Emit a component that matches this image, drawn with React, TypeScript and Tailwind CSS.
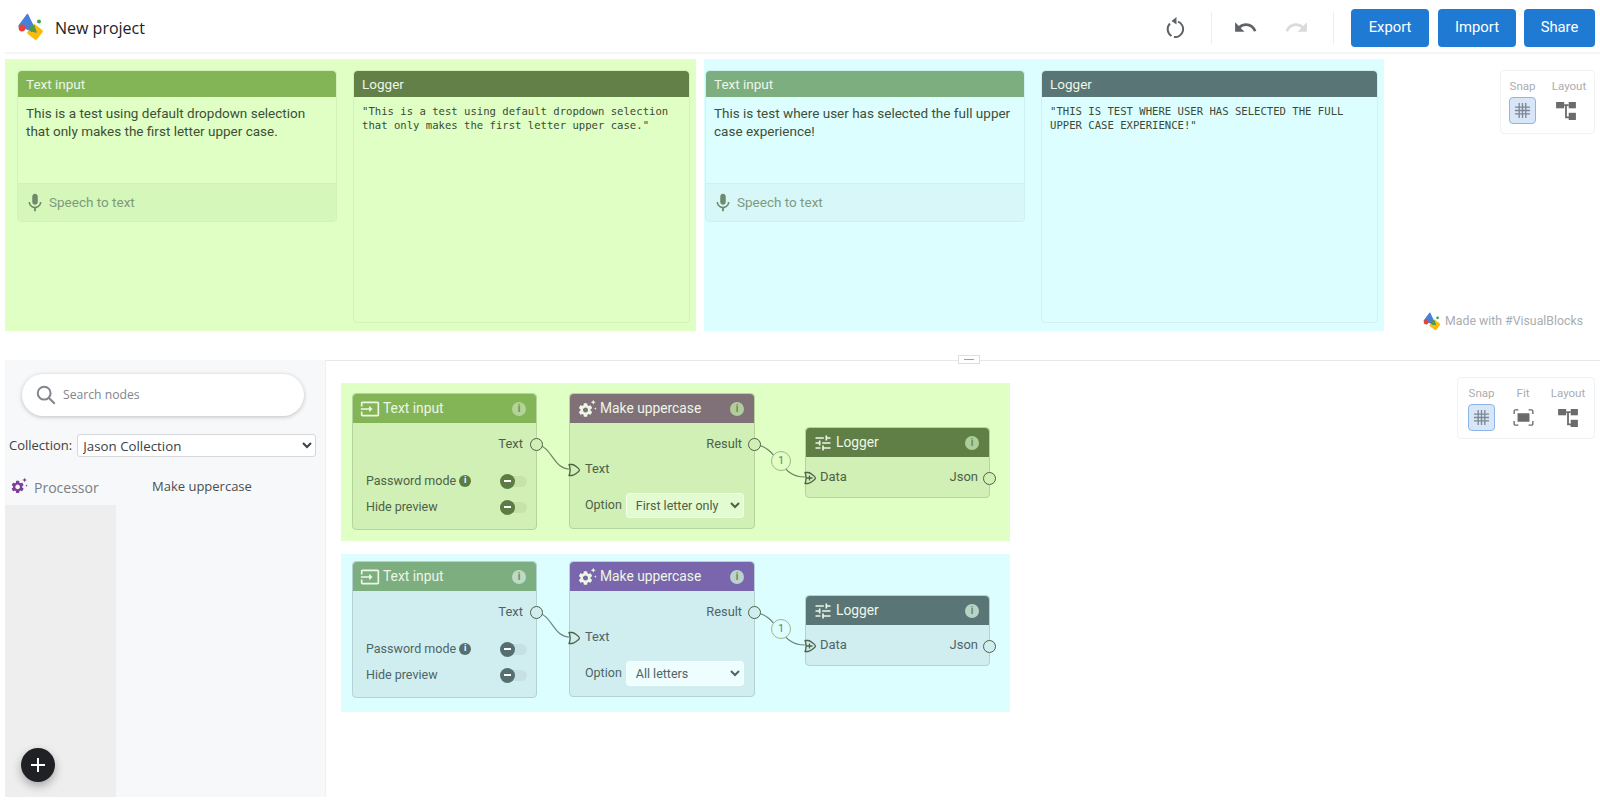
const sans = 'font-["Roboto",sans-serif]';

const Icon = ({ d, className }: { d: string; className: string }) => (
  <svg viewBox="0 0 24 24" fill="currentColor" className={className}>
    <path d={d} />
  </svg>
);

const inputIcon =
  'M21 3.01H3c-1.1 0-2 .9-2 2V9h2V4.99h18v14.03H3V15H1v4.01c0 1.1.9 1.98 2 1.98h18c1.1 0 2-.88 2-1.98v-14c0-1.11-.9-2-2-2zM11 16l4-4-4-4v3H1v2h10v3z';
const tuneIcon =
  'M3 17v2h6v-2H3zM3 5v2h10V5H3zm10 16v-2h8v-2h-8v-2h-2v6h2zM7 9v2H3v2h4v2h2V9H7zm14 4v-2H11v2h10zm-6-4h2V7h4V5h-4V3h-2v6z';
const micIcon =
  'M12 14c1.66 0 3-1.34 3-3V5c0-1.66-1.34-3-3-3S9 3.34 9 5v6c0 1.66 1.34 3 3 3zm5.3-3c0 3-2.54 5.1-5.3 5.1S6.7 14 6.7 11H5c0 3.41 2.72 6.23 6 6.72V21h2v-3.28c3.28-.48 6-3.3 6-6.72h-1.7z';
const undoIcon =
  'M12.5 8c-2.65 0-5.05.99-6.9 2.6L2 7v9h9l-3.62-3.62c1.39-1.16 3.16-1.88 5.12-1.88 3.54 0 6.55 2.31 7.6 5.5l2.37-.78C21.08 11.03 17.15 8 12.5 8z';
const redoIcon =
  'M18.4 10.6C16.55 8.99 14.15 8 11.5 8c-4.65 0-8.58 3.03-9.96 7.22L3.9 16c1.05-3.19 4.05-5.5 7.6-5.5 1.95 0 3.73.72 5.12 1.88L13 16h9V7l-3.6 3.6z';
const gearIcon =
  'M19.14 12.94c.04-.3.06-.61.06-.94 0-.32-.02-.64-.07-.94l2.03-1.58a.49.49 0 0 0 .12-.61l-1.92-3.32a.488.488 0 0 0-.59-.22l-2.39.96c-.5-.38-1.03-.7-1.62-.94l-.36-2.54a.484.484 0 0 0-.48-.41h-3.84c-.24 0-.43.17-.47.41l-.36 2.54c-.59.24-1.13.57-1.62.94l-2.39-.96c-.22-.08-.47 0-.59.22L2.74 8.87c-.12.21-.08.47.12.61l2.03 1.58c-.05.3-.09.63-.09.94s.02.64.07.94l-2.03 1.58a.49.49 0 0 0-.12.61l1.92 3.32c.12.22.37.29.59.22l2.39-.96c.5.38 1.03.7 1.62.94l.36 2.54c.05.24.24.41.48.41h3.84c.24 0 .44-.17.47-.41l.36-2.54c.59-.24 1.13-.56 1.62-.94l2.39.96c.22.08.47 0 .59-.22l1.92-3.32c.12-.22.07-.47-.12-.61l-2.01-1.58zM12 15.6c-1.98 0-3.6-1.62-3.6-3.6s1.62-3.6 3.6-3.6 3.6 1.62 3.6 3.6-1.62 3.6-3.6 3.6z';

const Logo = ({ className }: { className: string }) => (
  <svg viewBox="0 0 28 28" className={className}>
    <rect x="13" y="13" width="12" height="12" rx="1.5" transform="rotate(38 19 19)" fill="#fbbc04" />
    <path d="M11.5 1.5 L20 19 L3 13 Z" fill="#4a7fd6" stroke="#4a7fd6" strokeWidth="1.5" strokeLinejoin="round" />
    <path d="M13 14 L18.5 12 L20 18 L15 19 Z" fill="#4f9b45" />
    <circle cx="6" cy="15" r="3.4" fill="#ea4335" />
    <circle cx="23" cy="8.5" r="2" fill="#34a853" />
  </svg>
);

const GearSpark = ({ className }: { className: string }) => (
  <svg viewBox="0 0 24 24" fill="currentColor" className={className}>
    <g transform="translate(0 3) scale(0.85)">
      <path d={gearIcon} />
    </g>
    <path d="M19.5 1l.9 2.1 2.1.9-2.1.9-.9 2.1-.9-2.1-2.1-.9 2.1-.9zM22 10l.5 1.1 1.1.5-1.1.5-.5 1.1-.5-1.1-1.1-.5 1.1-.5z" />
  </svg>
);

const GridIcon = ({ className }: { className: string }) => (
  <svg viewBox="0 0 18 18" fill="none" stroke="currentColor" strokeWidth="1.4" className={className}>
    <path d="M5.5 1v16M9 1v16M12.5 1v16M1 5.5h16M1 9h16M1 12.5h16" />
  </svg>
);

const LayoutIcon = ({ className }: { className: string }) => (
  <svg viewBox="0 0 22 20" fill="currentColor" className={className}>
    <rect x="0" y="0" width="9" height="7" />
    <rect x="14" y="0" width="8" height="7" />
    <rect x="14" y="12" width="8" height="8" />
    <path d="M9 2.500h5v2h-5zM10 4h2v12h4v2h-6z" />
  </svg>
);

const FitIcon = ({ className }: { className: string }) => (
  <svg viewBox="0 0 24 20" fill="none" stroke="currentColor" strokeWidth="1.6" className={className}>
    <path d="M1 6V2.5C1 1.7 1.7 1 2.5 1H6M18 1h3.5c.8 0 1.5.7 1.5 1.5V6M23 14v3.5c0 .8-.7 1.5-1.5 1.5H18M6 19H2.500C1.700 19 1 18.300 1 17.500V14" />
    <rect x="5" y="5" width="14" height="10" fill="currentColor" stroke="none" />
  </svg>
);

const Preview = ({
  bg,
  pad,
  inputHead,
  logHead,
  footer,
  line,
  text,
  log,
}: {
  bg: string;
  pad: string;
  inputHead: string;
  logHead: string;
  footer: string;
  line: string;
  text: string;
  log: string;
}) => (
  <div className={`flex h-[272px] gap-4 pt-[11px] pr-[6px] ${bg} ${pad}`}>
    <div className={`flex h-[152px] w-[320px] flex-col rounded border ${line}`}>
      <div className={`flex h-[26px] items-center rounded-t px-2 text-[13.5px] text-[#eef7e6] ${inputHead}`}>Text input</div>
      <div className="flex-1 px-2 pt-[7px] text-[13.5px] leading-[18px] text-[#3f4f38]">{text}</div>
      <div className={`flex h-[38px] items-center gap-[3px] rounded-b border-t pl-[6px] text-[13.5px] ${line} ${footer}`}>
        <Icon d={micIcon} className="h-[22px] w-[22px] text-[#6f8a6c]" />
        <span className="text-[#7f9a7c]">Speech to text</span>
      </div>
    </div>
    <div className={`flex h-[253px] w-[337px] flex-col rounded border ${line}`}>
      <div className={`flex h-[26px] items-center rounded-t px-2 text-[13.5px] text-[#eef7e6] ${logHead}`}>Logger</div>
      <pre className='whitespace-pre-wrap px-2 pt-[8px] font-["DejaVu_Sans_Mono",monospace] text-[10.6px] leading-[13.5px] text-[#3b4a36]'>
        {log}
      </pre>
    </div>
  </div>
);

const ToolGroup = ({ fit, className, layoutIcon }: { fit?: boolean; className: string; layoutIcon: string }) => (
  <div className={`absolute flex rounded border border-[#f1f2f3] bg-white ${className}`}>
    <div className="flex w-[43px] flex-col items-center">
      <span className="mb-[4px] text-[11.5px] leading-[14px] text-[#a9adb1]">Snap</span>
      <div className="flex h-[27px] w-[27px] items-center justify-center rounded border border-[#8ab6ec] bg-[#d8e6f7] text-[#7b8794]">
        <GridIcon className="h-[17px] w-[17px]" />
      </div>
    </div>
    {fit && (
      <div className="flex w-[40px] flex-col items-center">
        <span className="mb-[4px] text-[11.5px] leading-[14px] text-[#a9adb1]">Fit</span>
        <div className="flex h-[27px] items-center text-[#6b6b6b]">
          <FitIcon className="h-[17px] w-[21px]" />
        </div>
      </div>
    )}
    <div className="flex w-[50px] flex-col items-center">
      <span className="mb-[4px] text-[11.5px] leading-[14px] text-[#a9adb1]">Layout</span>
      <div className="flex h-[27px] items-center text-[#6b6b6b]">
        <LayoutIcon className={`h-[18px] w-[20px] ${layoutIcon}`} />
      </div>
    </div>
  </div>
);

type Tone = {
  bg: string;
  body: string;
  line: string;
  ink: string;
  fill: string;
  inputHead: string;
  procHead: string;
  logHead: string;
  field: string;
  info: string;
  edge: string;
  chip: string;
};

const green: Tone = {
  bg: 'bg-[#dfffc4]',
  body: 'bg-[#d0f0b5]',
  line: 'border-[#b5d49c]',
  ink: 'text-[#4f6048]',
  fill: 'bg-[#5b7c42]',
  inputHead: 'bg-[#83b557]',
  procHead: 'bg-[#807077]',
  logHead: 'bg-[#5f7f46]',
  field: 'bg-[#e3fbd0]',
  info: 'bg-[#b6d8a0]',
  edge: '#6d8260',
  chip: 'bg-[#dfffc4]',
};

const cyan: Tone = {
  bg: 'bg-[#ddfeff]',
  body: 'bg-[#d0eef0]',
  line: 'border-[#b3d2d4]',
  ink: 'text-[#4f6466]',
  fill: 'bg-[#566e70]',
  inputHead: 'bg-[#7cae80]',
  procHead: 'bg-[#7a66ac]',
  logHead: 'bg-[#597576]',
  field: 'bg-[#eefeff]',
  info: 'bg-[#c2dfd0]',
  edge: '#6c8284',
  chip: 'bg-[#ddfeff]',
};

const Port = ({ tone }: { tone: Tone }) => (
  <span className={`absolute -right-[7px] top-[44px] h-[13px] w-[13px] rounded-full border-[1.5px] border-[#4d6148] ${tone.body}`} />
);

const InPort = ({ className, plus }: { className: string; plus?: boolean }) => (
  <svg viewBox="0 0 14 14" fill="none" stroke="#4d6148" strokeWidth="1.3" className={`absolute h-[14px] w-[14px] ${className}`}>
    <path d="M2 1.500 H5 C7 1.500 12.500 5.500 12.500 7 C12.500 8.500 7 12.500 5 12.500 H2 C3.500 9 3.500 5 2 1.500 Z" strokeLinejoin="round" />
    {plus && <path d="M3.500 7h6M6.500 4.500v5" />}
  </svg>
);

const Head = ({ color, icon, title, info }: { color: string; icon: React.ReactNode; title: string; info: string }) => (
  <div className={`flex h-[29px] items-center gap-[3px] rounded-t pl-[7px] pr-[10px] text-[13.8px] text-[#eef6e6] ${color}`}>
    {icon}
    <span>{title}</span>
    <span className={`ml-auto flex h-[14px] w-[14px] items-center justify-center rounded-full text-[10px] font-bold text-[#6b8a58] opacity-90 ${info}`}>i</span>
  </div>
);

const Toggle = ({ tone }: { tone: Tone }) => (
  <span className="relative -mr-[4px] flex h-[11px] w-[26px] items-center rounded-full bg-black/5">
    <span className={`absolute -left-[1px] flex h-[15px] w-[15px] items-center justify-center rounded-full ${tone.fill}`}>
      <span className="h-[2px] w-[7px] bg-white" />
    </span>
  </span>
);

const Group = ({ tone, inset, option }: { tone: Tone; inset: string; option: string }) => (
  <div className={`relative h-[158px] w-[669px] shrink-0 ${tone.bg}`}>
    <div className={`absolute left-0 right-0 ${inset}`}>
      <svg className="absolute left-0 top-0 h-[130px] w-[669px]" fill="none" stroke={tone.edge} strokeWidth="1.2">
        <path d="M196 51 C 212 55, 212 76, 229 76" />
        <path d="M414 51 C 438 55, 438 84, 464 84" />
      </svg>

      <div className={`absolute left-[11px] top-0 h-[137px] w-[185px] rounded border ${tone.line} ${tone.body}`}>
        <Head
          color={tone.inputHead}
          info={tone.info}
          title="Text input"
          icon={<Icon d={inputIcon} className="h-[20px] w-[20px]" />}
        />
        <div className={`flex flex-col px-[13px] text-[12.5px] ${tone.ink}`}>
          <span className="mt-[13px] text-right text-[13px] leading-[16px]">Text</span>
          <div className="mt-[21px] flex h-[16px] items-center">
            <span>Password mode</span>
            <span className={`ml-[3px] flex h-[12px] w-[12px] items-center justify-center rounded-full text-[9px] font-bold text-white ${tone.fill}`}>i</span>
            <span className="ml-auto"><Toggle tone={tone} /></span>
          </div>
          <div className="mt-[10px] flex h-[16px] items-center">
            <span>Hide preview</span>
            <span className="ml-auto"><Toggle tone={tone} /></span>
          </div>
        </div>
        <Port tone={tone} />
      </div>

      <div className={`absolute left-[228px] top-0 h-[136px] w-[186px] rounded border ${tone.line} ${tone.body}`}>
        <Head
          color={tone.procHead}
          info={tone.info}
          title="Make uppercase"
          icon={<GearSpark className="h-[20px] w-[20px]" />}
        />
        <div className={`flex flex-col px-[15px] text-[12.8px] ${tone.ink}`}>
          <span className="mt-[13px] -mr-[3px] text-right leading-[16px]">Result</span>
          <span className="mt-[9px] leading-[16px]">Text</span>
          <div className="mt-[16px] -mr-[5px] flex items-center gap-[4px] text-[12.5px]">
            <span>Option</span>
            <select
              defaultValue={option}
              className={`h-[25px] min-w-0 flex-1 rounded border border-white/60 pl-[5px] pr-[3px] ${tone.field}`}
            >
              <option>{option}</option>
            </select>
          </div>
        </div>
        <Port tone={tone} />
        <InPort className="-left-[3px] top-[69px]" />
      </div>

      <div className={`absolute left-[464px] top-[34px] h-[71px] w-[185px] rounded border ${tone.line} ${tone.body}`}>
        <Head
          color={tone.logHead}
          info={tone.info}
          title="Logger"
          icon={<Icon d={tuneIcon} className="h-[20px] w-[20px]" />}
        />
        <div className={`flex justify-between pl-[14px] pr-[11px] pt-[12px] text-[13px] leading-[16px] ${tone.ink}`}>
          <span>Data</span>
          <span>Json</span>
        </div>
        <Port tone={tone} />
        <InPort plus className="-left-[3px] top-[43px]" />
      </div>

      <span className={`absolute left-[430px] top-[58px] flex h-[20px] w-[20px] items-center justify-center rounded-full border border-[#9fb392] text-[11px] text-[#6d8260] ${tone.chip}`}>
        1
      </span>
    </div>
  </div>
);

export default function App() {
  return (
    <div className={`flex h-[809px] w-[1600px] flex-col overflow-hidden bg-white text-[#3c4043] ${sans}`}>
      <header className="ml-[5px] flex h-[54px] shrink-0 items-center border-b-2 border-[#f4f5f5] pt-[3px] pl-[11px] pr-[5px]">
        <Logo className="-mt-[2px] h-[28px] w-[28px]" />
        <span className='ml-[11px] font-["Open_Sans",sans-serif] text-[16px] text-[#202124]'>New project</span>
        <div className="ml-auto flex h-[38px] items-center">
          <svg viewBox="0 0 24 24" fill="none" stroke="#5f6368" strokeWidth="2" className="mr-[24px] h-[24px] w-[24px]">
            <path d="M7 7.500A8 8 0 0 0 8.500 20M11 21A8 8 0 0 0 15 5.600" />
            <path d="M13.500 1 8.500 5l5 3.500z" fill="#5f6368" stroke="none" />
          </svg>
          <span className="h-[32px] w-px bg-[#eeeeee]" />
          <Icon d={undoIcon} className="ml-[21px] h-[25px] w-[25px] text-[#5f6368]" />
          <Icon d={redoIcon} className="ml-[26px] h-[25px] w-[25px] text-[#dadada]" />
          <span className="ml-[24px] h-[32px] w-px bg-[#eeeeee]" />
          <button className="ml-[17px] h-[38px] w-[78px] rounded bg-[#1f7ad4] text-[14.8px] text-white">Export</button>
          <button className="ml-[9px] h-[38px] w-[78px] rounded bg-[#1f7ad4] text-[14.8px] text-white">Import</button>
          <button className="ml-[8px] h-[38px] w-[71px] rounded bg-[#1f7ad4] text-[14.8px] text-white">Share</button>
        </div>
      </header>

      <section className="relative mt-[5px] flex h-[301px] shrink-0 items-start pl-[5px]">
        <Preview
          bg="bg-[#dfffc4]"
          pad="pl-[12px]"
          inputHead="bg-[#83b557]"
          logHead="bg-[#628048]"
          footer="bg-[#d5f7b9]"
          line="border-[#d2f2b8]"
          text="This is a test using default dropdown selection that only makes the first letter upper case."
          log={'"This is a test using default dropdown selection\nthat only makes the first letter upper case."'}
        />
        <div className="ml-[8px]">
          <Preview
            bg="bg-[#ddfeff]"
            pad="pl-[1px]"
            inputHead="bg-[#7cae80]"
            logHead="bg-[#597576]"
            footer="bg-[#d7f7f9]"
            line="border-[#cfeff1]"
            text="This is test where user has selected the full upper case experience!"
            log={'"THIS IS TEST WHERE USER HAS SELECTED THE FULL\nUPPER CASE EXPERIENCE!"'}
          />
        </div>
        <ToolGroup layoutIcon="-ml-[7px]" className="right-[5px] top-[11px] h-[64px] w-[95px] pt-[8px]" />
        <div className="absolute right-[17px] top-[253px] flex items-center gap-[4px] text-[12.3px] text-[#a9adb1]">
          <Logo className="h-[19px] w-[19px]" />
          <span>Made with #VisualBlocks</span>
        </div>
        <span className="absolute left-[958px] top-[296px] z-10 flex h-[9px] w-[22px] items-center justify-center border border-[#dcdfe2] bg-white">
          <span className="h-px w-[10px] bg-[#9aa0a6]" />
        </span>
      </section>

      <section className="flex h-[437px] shrink-0">
        <aside className="relative ml-[5px] flex w-[321px] shrink-0 flex-col border-r border-[#eff0f2] bg-[#f7f8fa]">
          <div className="ml-[17px] mt-[14px] flex h-[42px] w-[282px] items-center rounded-full bg-white pl-[13px] shadow-[0_1px_4px_rgba(60,64,67,0.3)]">
            <svg viewBox="0 0 24 24" fill="none" stroke="#80868b" strokeWidth="2.200" className="h-[22px] w-[22px]">
              <circle cx="10" cy="10" r="7" />
              <path d="m15.500 15.500 6 6" />
            </svg>
            <span className='ml-[6px] font-["Open_Sans",sans-serif] text-[12.2px] text-[#80868b]'>Search nodes</span>
          </div>
          <div className='ml-[4px] mt-[18px] flex items-center gap-[5px] font-["Open_Sans",sans-serif] text-[13px] text-[#3c4043]'>
            <span>Collection:</span>
            <select defaultValue="Jason Collection" className="h-[23px] w-[239px] rounded-[3px] border border-[#d5d7da] bg-white pl-[1px] text-[13.3px]">
              <option>Jason Collection</option>
            </select>
          </div>
          <div className="ml-[5px] mt-[14px] flex h-[34px] items-start pt-[6px] font-['Open_Sans',sans-serif]">
            <GearSpark className="h-[18px] w-[18px] text-[#7b3f98]" />
            <span className="ml-[6px] w-[118px] text-[14px] text-[#7a7f85]">Processor</span>
            <span className="text-[13px] text-[#4a4e52]">Make uppercase</span>
          </div>
          <div className="w-[111px] flex-1 bg-[#eeeeee]" />
          <button className="absolute left-[16px] top-[388px] flex h-[34px] w-[34px] items-center justify-center rounded-full bg-[#202124] shadow-[0_4px_10px_rgba(0,0,0,0.3)]">
            <svg viewBox="0 0 16 16" stroke="white" strokeWidth="2" className="h-[16px] w-[16px]">
              <path d="M8 1v14M1 8h14" />
            </svg>
          </button>
        </aside>

        <main className="relative flex flex-1 flex-col gap-[13px] border-t border-[#e6e8ea] pl-[15px] pt-[22px]">
          <Group tone={green} inset="top-[10px]" option="First letter only" />
          <Group tone={cyan} inset="top-[7px]" option="All letters" />
          <ToolGroup fit layoutIcon="ml-0" className="right-[5px] top-[16px] h-[62px] w-[138px] pt-[8px] pl-[2px]" />
        </main>
      </section>
    </div>
  );
}
